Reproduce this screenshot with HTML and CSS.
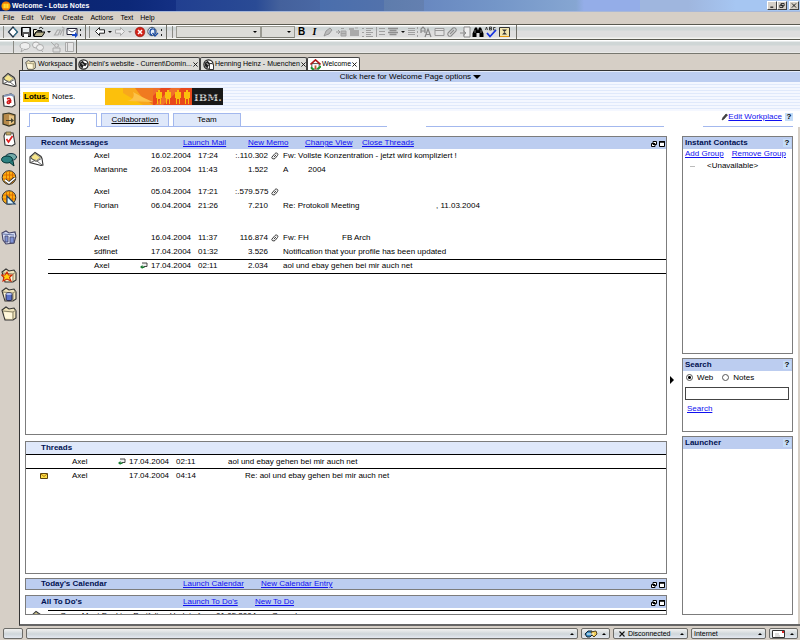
FILE: index.html
```
<!DOCTYPE html>
<html lang="en">
<head>
    <meta charset="UTF-8">
    <meta name="viewport" content="width=device-width, initial-scale=1.0">
    <title>Welcome - Lotus Notes</title>
    <link rel="stylesheet" href="styles.css">
</head>
<body>
    <!-- Icon set -->
    <svg class="icon-defs" aria-hidden="true">
        <symbol id="i-notes" viewBox="0 0 11 11"><circle cx="5.5" cy="5.5" r="5" fill="#ff9a00"/><path d="M3.5 3v5M5.5 3v5M7.5 3v5" stroke="#fff04a" stroke-width="1.2"/><path d="M2 2h7M1 9h8" stroke="#d04a10" stroke-width=".7"/></symbol>
        <symbol id="i-diamond" viewBox="0 0 12 12"><path d="M6 1l4.500 5L6 11 1.500 6z" fill="#fff" stroke="#234" stroke-width="1.2"/><path d="M7 2l3.500 4L7 10" stroke="#38a" fill="none"/></symbol>
        <symbol id="i-save" viewBox="0 0 12 12"><path d="M1.5 1.5h9v9h-8l-1-1z" fill="#555" stroke="#000"/><path d="M3 2h6v4H3z" fill="#e8eef0"/><path d="M4 8h4v3H4z" fill="#fff"/></symbol>
        <symbol id="i-open" viewBox="0 0 12 12"><path d="M.5 10V3.500h3l1 1h4V6H3z" fill="#f4efd0" stroke="#000"/><path d="M3 6h9l-3 4.500H.800z" fill="#b9b28c" stroke="#000"/><path d="M6 2.500c2-2 3-1 4 .500" fill="none" stroke="#000"/></symbol>
        <symbol id="i-sign" viewBox="0 0 12 12"><path d="M1.500 9l3-5h3L5 9zM7 9l3-6M9 1l2 1-1 8" fill="none" stroke="#aaa" stroke-width="1.200"/></symbol>
        <symbol id="i-send" viewBox="0 0 12 12"><path d="M1 2.500h10v6H1z" fill="#fff" stroke="#223"/><path d="M1 3l5 3 5-3" fill="none" stroke="#667"/><path d="M6 8h3V6l3 3-3 3v-2H6z" fill="#1848c8"/></symbol>
        <symbol id="i-back" viewBox="0 0 12 12"><path d="M1.500 5.500l4-4v2.300h5v3.400h-5v2.300z" fill="#fff" stroke="#222"/></symbol>
        <symbol id="i-fwd" viewBox="0 0 12 12"><path d="M10.500 5.500l-4-4v2.300h-5v3.400h5v2.300z" fill="#eee" stroke="#aaa"/></symbol>
        <symbol id="i-stop" viewBox="0 0 12 12"><circle cx="6" cy="6" r="4.800" fill="#d32218" stroke="#8a1008" stroke-width=".6"/><path d="M4 4l4 4M8 4l-4 4" stroke="#fff" stroke-width="1.500"/></symbol>
        <symbol id="i-refresh" viewBox="0 0 12 12"><circle cx="5" cy="5.500" r="4.200" fill="#e8f0fa" stroke="#456"/><path d="M3 6c0-4 5-4 5-1v3M5.500 7l2.500 3 3-3M3 6c0 2 1 3 2 3" fill="none" stroke="#1a4aa0" stroke-width="1.300"/></symbol>
        <symbol id="i-pen" viewBox="0 0 12 12"><path d="M2 10l2-5 4-3 2 2-3 4-3 1z" fill="#bbb" stroke="#8c8c8c" stroke-width=".800"/></symbol>
        <symbol id="i-indent" viewBox="0 0 12 12"><path d="M1 6h3M3 4l2 2-2 2" fill="none" stroke="#999"/><path d="M6 2.500h3M6 5h5v5H6zM6 7.500h5" fill="#bbb" stroke="#a2a2a2"/></symbol>
        <symbol id="i-paste" viewBox="0 0 12 12"><path d="M1 2h5v2H1zM2 4h9v6H2z" fill="#aaa"/><path d="M7 2h3" stroke="#aaa"/></symbol>
        <symbol id="i-list" viewBox="0 0 12 12"><path d="M1 2.500h2M1 6.500h2M1 10.500h2M5 2.500h7M5 4.500h5M5 6.500h7M5 8.500h5M5 10.500h7" stroke="#a0a0a0"/></symbol>
        <symbol id="i-numlist" viewBox="0 0 12 12"><path d="M2.500 1v10M5 2.500h6M5 5.500h6M5 8.500h6" stroke="#a0a0a0"/></symbol>
        <symbol id="i-align" viewBox="0 0 12 12"><path d="M1 2.500h10M2.500 4.500h7M1 6.500h10M2.500 8.500h7" stroke="#8f8f8f" stroke-width="1.300"/></symbol>
        <symbol id="i-spacing" viewBox="0 0 12 12"><path d="M1 2.500h7M1 4.500h7M1 6.500h7M1 8.500h7M10.500 1v2M10.500 5v2M10.500 9v2" stroke="#a0a0a0"/></symbol>
        <symbol id="i-style" viewBox="0 0 12 12"><path d="M1 7V3l2-2 2 2v4M1 5h4M5 11l3-8 3 8M6 8.500h4" fill="none" stroke="#888" stroke-width="1.200"/></symbol>
        <symbol id="i-table" viewBox="0 0 12 12"><path d="M2 2.500h9v7H2zM2 4.500h9" fill="#e2e2e2" stroke="#999"/></symbol>
        <symbol id="i-clip" viewBox="0 0 12 12"><path d="M2 7l5-5c2-1 4 1 3 3l-5 5c-2 1-4-1-3-3l4-4M4 8l4-4" fill="none" stroke="#8c8c8c" stroke-width="1.100"/></symbol>
        <symbol id="i-import" viewBox="0 0 12 12"><path d="M5 1h6v10H5zM1 7h5M4 4.500l3 2.500-3 2.500" fill="#eee" stroke="#8c8c8c"/></symbol>
        <symbol id="i-find" viewBox="0 0 12 12"><path d="M3 1.500h2l1 3 1-3h2l2.500 6v3.500h-4V7h-3v4h-4V7.500z" fill="#000"/><path d="M3 4v3M9 4v3" stroke="#bbb" stroke-width=".600"/></symbol>
        <symbol id="i-spell" viewBox="0 0 12 12"><path d="M.500 4l1-3 1 3M4.500 4V1h2v1.500h-2M6.500 2.500V4h-2M10.500 1.500h-2V4h2" fill="none" stroke="#222" stroke-width=".800"/><path d="M2 7l3 3.500L11 4" fill="none" stroke="#1430e0" stroke-width="1.800"/></symbol>
        <symbol id="i-props" viewBox="0 0 12 12"><path d="M1.500 1.500h10v9h-10z" fill="#f2e6b0" stroke="#333"/><path d="M4 3.500h5L6.500 6zM4 8.500h5L6.500 6z" fill="#333"/><path d="M2 10.500h9" stroke="#e89b10"/></symbol>
        <symbol id="i-chat" viewBox="0 0 12 12"><ellipse cx="6" cy="5" rx="5" ry="3.500" fill="#eee" stroke="#aaa"/><path d="M3 8l-1 3 4-3" fill="#eee" stroke="#aaa"/></symbol>
        <symbol id="i-chats" viewBox="0 0 12 12"><ellipse cx="4" cy="4" rx="3.500" ry="3" fill="#eee" stroke="#aaa"/><ellipse cx="8" cy="6.500" rx="3.500" ry="3" fill="#eee" stroke="#aaa"/><path d="M9 9l2 2" stroke="#aaa"/></symbol>
        <symbol id="i-person" viewBox="0 0 12 12"><path d="M1 1l4 4M3 11V7h7v4zM8 3v3" fill="#ddd" stroke="#aaa"/><circle cx="6.500" cy="4.500" r="1.800" fill="#ddd" stroke="#aaa"/></symbol>
        <symbol id="i-book" viewBox="0 0 12 12"><path d="M2.500 1.500h8v9h-8zM4.500 2v8" fill="#e4e4e4" stroke="#aaa"/></symbol>

        <symbol id="i-mail" viewBox="0 0 16 16"><path d="M2 6l5-4.500 6 4 1 2 1 6.500-2 .500-11-3z" fill="#fff" stroke="#333" stroke-width="1.100"/><path d="M3.500 5.500L7 2.500l5.500 4-4 3-5-1.500z" fill="#f6e58a" stroke="#776" stroke-width=".800"/><path d="M2 6.500l6 4 5.500-3M2.500 11.500L7 9.500M9 10l5 4" fill="none" stroke="#555" stroke-width=".900"/></symbol>
        <symbol id="i-calendar" viewBox="0 0 16 16"><path d="M2 4l8-2 3 2 1 9-3 2-8-1z" fill="#fff" stroke="#333" stroke-width="1.200"/><path d="M3 4l7-1.500L13 4" stroke="#8497b8" stroke-width="2" fill="none"/><path d="M6 7c3-1.500 4 0 3.500 4M9.500 9c-4-1-4 3-1.500 2.500z" fill="none" stroke="#d01818" stroke-width="1.600"/></symbol>
        <symbol id="i-contacts" viewBox="0 0 16 16"><path d="M2 3l6-1 6 2v9l-6 2-6-2z" fill="#b78a4a" stroke="#332" stroke-width="1.200"/><path d="M8 4l5 1v7l-5 2z" fill="#e4c486"/><path d="M5 9h5V7l3 2.500-3 2.500v-2H5z" fill="#443"/></symbol>
        <symbol id="i-todo" viewBox="0 0 16 16"><path d="M4 2h8l2 11-3 2-7-1-1-9z" fill="#fff" stroke="#333" stroke-width="1.100"/><path d="M5 1h5v3H5z" fill="#c7a86a" stroke="#553" stroke-width=".700"/><path d="M5.500 8l2 3 4-6" fill="none" stroke="#e02020" stroke-width="1.700"/></symbol>
        <symbol id="i-talk" viewBox="0 0 16 16"><ellipse cx="10" cy="6" rx="5.500" ry="3.500" fill="#71aaa8" stroke="#134"/><ellipse cx="6" cy="8.500" rx="5.500" ry="3.500" fill="#2d8080" stroke="#033"/><path d="M8 11l5 4-1-5" fill="#2d8080" stroke="#033"/></symbol>
        <symbol id="i-globe" viewBox="0 0 16 16"><circle cx="8" cy="7.500" r="6.800" fill="#ffae12" stroke="#333"/><path d="M5.500 1.500v12M8.500 1v13M11.500 2v11M2 5h12M2 9h12" stroke="#d56a00" stroke-width=".900"/><path d="M4 10l4 3 6-5" fill="none" stroke="#333" stroke-width="3"/><path d="M4 10l4 3 6-5" fill="none" stroke="#fff" stroke-width="1.600"/></symbol>
        <symbol id="i-design" viewBox="0 0 16 16"><circle cx="8" cy="7.500" r="6.800" fill="#ffae12" stroke="#333"/><path d="M5.500 1.500v12M8.500 1v13M11.500 2v11M2 5h12M2 9h12" stroke="#d56a00" stroke-width=".900"/><path d="M6 6l8 8H6z" fill="#d8f0f8" stroke="#246" stroke-width="1.200"/></symbol>
        <symbol id="i-folder" viewBox="0 0 16 16"><path d="M1 5l4-3 3 2 5-1 2 3v7l-3 2H4z" fill="#efe3ba" stroke="#333" stroke-width="1.100"/><path d="M2 6l10 1v7M12 7l3-2" fill="none" stroke="#8a8468"/><path d="M3 7l8 1v6l-7-1z" fill="#fff8dc"/></symbol>
        <symbol id="i-servers" viewBox="0 0 16 16"><path d="M1 4l4-2 3 2 6-1 1 4-2 7-8 1-3-4z" fill="#d5dcf4" stroke="#446" stroke-width="1.100"/><path d="M4 7h3v6H4zM9 8h4v6H9z" fill="#8093d8" stroke="#446" stroke-width=".800"/><path d="M2 5l11 1" stroke="#6474a8"/></symbol>
        <symbol id="i-star" viewBox="0 0 16 16"><use href="#i-folder"/><path d="M6 5l1.500 3H11l-2.500 2.500L10 14l-4-2-4 2 1-3.500L.500 8H4z" fill="#ffcf10" stroke="#d02808" stroke-width="1.100"/></symbol>
        <symbol id="i-data" viewBox="0 0 16 16"><use href="#i-folder"/><path d="M5 8c0-1.500 6-1.500 6 0v5.500c0 1.500-6 1.500-6 0z" fill="#5b72c8" stroke="#224"/><ellipse cx="8" cy="8" rx="3" ry="1" fill="#b8c6f4"/></symbol>
        <symbol id="i-page" viewBox="0 0 12 12"><circle cx="6" cy="6" r="5" fill="#fff" stroke="#222" stroke-width="1.400"/><path d="M2 7V4l3-2 2 2 3 1-2 3-2-1-1 3-2-1z" fill="#222"/><path d="M4 5l2 1" stroke="#fff"/></symbol>
        <symbol id="i-doc" viewBox="0 0 12 12"><use href="#i-page"/><path d="M7 5h3l1.500 1.500v5H7z" fill="#fff" stroke="#222"/></symbol>
        <symbol id="i-home" viewBox="0 0 12 12"><path d="M2 5h8v6H2z" fill="#fff" stroke="#444"/><path d="M.500 6L6 1l5.500 5" fill="none" stroke="#b01818" stroke-width="1.800"/><path d="M5 7h2v4H5z" fill="#c85a2a"/><path d="M1 9l3 3M8 11l4-3" stroke="#1b9a30" stroke-width="2"/></symbol>
        <symbol id="i-attach" viewBox="0 0 8 8"><path d="M1 5l3-3.500c1.500-1.200 3.800 0 2.500 2L4 6.500C2.500 7.500 0 6.500 1 5zM3 5.200l2-2.400" fill="none" stroke="#222" stroke-width=".900"/></symbol>
        <symbol id="i-reply" viewBox="0 0 8 8"><path d="M2 1h5v3.500H4L2.500 6" fill="#eee" stroke="#333" stroke-width=".900"/><path d="M0 5l2.500-2v1.500h2v1.500h-2V7z" fill="#187a30"/></symbol>
        <symbol id="i-new" viewBox="0 0 8 6"><path d="M.500.500h7v5h-7z" fill="#ffe048" stroke="#5c4310"/><path d="M1 1l3 2.500L7 1" fill="none" stroke="#b07a10"/></symbol>
        <symbol id="i-restore" viewBox="0 0 6 6"><path d="M2 .500h3.500v3H2zM.500 2.500h3.500v3H.500z" fill="#fff" stroke="#000"/></symbol>
        <symbol id="i-max" viewBox="0 0 6 6"><path d="M.500.500h5v5h-5z" fill="#fff" stroke="#000"/><path d="M0 1h6" stroke="#000" stroke-width="1.500"/></symbol>
        <symbol id="i-x" viewBox="0 0 6 6"><path d="M.500.500l5 5M5.500.500l-5 5" stroke="#111" stroke-width="1.100"/></symbol>
        <symbol id="i-min" viewBox="0 0 6 6"><path d="M1 5h3.500" stroke="#000" stroke-width="1.300"/></symbol>
        <symbol id="i-pencil" viewBox="0 0 7 8"><path d="M1 7l1-2.500L5 1l1.500 1L3 6z" fill="#444" stroke="#222" stroke-width=".600"/></symbol>
        <symbol id="i-net" viewBox="0 0 14 8"><path d="M1 4l3-3h4l1 3-3 3H3z" fill="#3c8fc4" stroke="#123"/><path d="M7 2l5-1 1 3-3 3-2-2z" fill="#f0ce58" stroke="#542"/><path d="M3 4h7" stroke="#fff"/></symbol>
        <symbol id="i-letter" viewBox="0 0 13 8"><path d="M.500.500h12v7H.500z" fill="#fff" stroke="#333"/><path d="M3 4h4M3 6h5" stroke="#bbb"/><path d="M10 1h2v2h-2z" fill="#d22"/></symbol>
    </svg>

    <header class="titlebar">
        <svg class="ico-title"><use href="#i-notes"/></svg>
        <h1>Welcome - Lotus Notes</h1>
        <div class="win-buttons">
            <button aria-label="Minimize"><svg><use href="#i-min"/></svg></button>
            <button aria-label="Restore"><svg><use href="#i-restore"/></svg></button>
            <button aria-label="Close"><svg><use href="#i-x"/></svg></button>
        </div>
    </header>

    <nav class="menubar">
        <button>File</button>
        <button>Edit</button>
        <button>View</button>
        <button>Create</button>
        <button>Actions</button>
        <button>Text</button>
        <button>Help</button>
    </nav>

    <div class="toolbar">
        <div class="group group-file">
            <button aria-label="Properties"><svg><use href="#i-diamond"/></svg></button>
            <button aria-label="Save"><svg><use href="#i-save"/></svg></button>
            <button aria-label="Open"><svg><use href="#i-open"/></svg></button>
            <i class="caret"></i>
            <button aria-label="Sign"><svg><use href="#i-sign"/></svg></button>
            <button aria-label="Send"><svg><use href="#i-send"/></svg></button>
            <i class="dots"></i>
        </div>
        <div class="group group-nav">
            <button aria-label="Back"><svg><use href="#i-back"/></svg></button>
            <i class="caret"></i>
            <button aria-label="Forward"><svg><use href="#i-fwd"/></svg></button>
            <i class="caret dim"></i>
            <button aria-label="Stop"><svg><use href="#i-stop"/></svg></button>
            <button aria-label="Refresh"><svg><use href="#i-refresh"/></svg></button>
            <i class="dots"></i>
        </div>
        <div class="group group-edit">
            <span class="combo combo-font"><select aria-label="Font"><option></option></select></span>
            <span class="combo combo-size"><select aria-label="Size"><option></option></select></span>
            <button class="bold">B</button>
            <button class="italic">I</button>
            <button aria-label="Highlighter"><svg><use href="#i-pen"/></svg></button>
            <button aria-label="Indent"><svg><use href="#i-indent"/></svg></button>
            <button aria-label="Paste"><svg><use href="#i-paste"/></svg></button>
            <button aria-label="Bullets"><svg><use href="#i-list"/></svg></button>
            <button aria-label="Numbers"><svg><use href="#i-numlist"/></svg></button>
            <button aria-label="Align"><svg><use href="#i-align"/></svg></button>
            <i class="caret"></i>
            <button aria-label="Spacing"><svg><use href="#i-spacing"/></svg></button>
            <button aria-label="Style"><svg><use href="#i-style"/></svg></button>
            <button aria-label="Table"><svg><use href="#i-table"/></svg></button>
            <button aria-label="Attach"><svg><use href="#i-clip"/></svg></button>
            <button aria-label="Import"><svg><use href="#i-import"/></svg></button>
            <button aria-label="Find"><svg><use href="#i-find"/></svg></button>
            <button aria-label="Spell check"><svg><use href="#i-spell"/></svg></button>
            <button aria-label="Text properties"><svg><use href="#i-props"/></svg></button>
        </div>
    </div>
    <div class="toolbar">
        <div class="group group-chat">
            <button aria-label="Chat"><svg><use href="#i-chat"/></svg></button>
            <button aria-label="Group chat"><svg><use href="#i-chats"/></svg></button>
            <button class="spaced" aria-label="Status"><svg><use href="#i-person"/></svg></button>
            <button aria-label="Address book"><svg><use href="#i-book"/></svg></button>
        </div>
    </div>

    <div class="desk">
        <aside class="bookmarks">
            <div class="bookmark-set apps">
                <button aria-label="Mail"><svg><use href="#i-mail"/></svg></button>
                <button aria-label="Calendar"><svg><use href="#i-calendar"/></svg></button>
                <button aria-label="Contacts"><svg><use href="#i-contacts"/></svg></button>
                <button aria-label="To Do"><svg><use href="#i-todo"/></svg></button>
                <button aria-label="Discussion"><svg><use href="#i-talk"/></svg></button>
                <button aria-label="Administrator"><svg><use href="#i-globe"/></svg></button>
                <button aria-label="Designer"><svg><use href="#i-design"/></svg></button>
            </div>
            <div class="bookmark-set">
                <button aria-label="Servers"><svg><use href="#i-servers"/></svg></button>
            </div>
            <div class="bookmark-set">
                <button aria-label="Favorites"><svg><use href="#i-star"/></svg></button>
                <button aria-label="Databases"><svg><use href="#i-data"/></svg></button>
                <button aria-label="More bookmarks"><svg><use href="#i-folder"/></svg></button>
            </div>
        </aside>

        <div class="window">
            <nav class="window-tabs">
                <div class="wtab"><svg><use href="#i-folder"/></svg>Workspace</div>
                <div class="wtab wtab-site"><svg><use href="#i-page"/></svg>heini's website - Current\Domin...<button aria-label="Close tab"><svg><use href="#i-x"/></svg></button></div>
                <div class="wtab wtab-mail"><svg><use href="#i-doc"/></svg>Henning Heinz - Muenchen<button aria-label="Close tab"><svg><use href="#i-x"/></svg></button></div>
                <div class="wtab wtab-home active"><svg><use href="#i-home"/></svg>Welcome<button aria-label="Close tab"><svg><use href="#i-x"/></svg></button></div>
            </nav>

            <main class="page">
                <button class="page-options">Click here for Welcome Page options <i class="arrow-down"></i></button>
                <div class="brand">
                    <div class="brand-name"><b>Lotus.</b> Notes.</div>
                    <svg class="banner" viewBox="0 0 118 17" role="img" aria-label="IBM">
                        <path d="M0 0h48v17H0z" fill="#fcc00c"/>
                        <path d="M18 0h30v17H38L18 5z" fill="#f8a81c"/>
                        <path d="M30 0h18v17L36 8z" fill="#f07a20"/>
                        <path d="M22 13c6-1 8-5 6-9l9 5 11 5z" fill="#fcc24a"/>
                        <path d="M48 0h39v17H48z" fill="#e8481c"/>
                        <path d="M48 0h8l-8 8zM66 0h10L58 17h-8z" fill="#f0702c"/>
                        <g fill="#fcc00c">
                            <path id="man" d="M53 2h2v2h2v6h-1v6h-1v-5h-2v5h-1v-6h-1V4h2z"/>
                            <use href="#man" x="9"/>
                            <use href="#man" x="19"/>
                            <use href="#man" x="28"/>
                        </g>
                        <path d="M87 0h31v17H87z" fill="#181818"/>
                        <text x="89" y="13" class="ibm">IBM.</text>
                        <path d="M89 6.500h27M89 8.500h27M89 10.500h27" stroke="#181818" stroke-width=".4"/>
                    </svg>
                </div>

                <div class="tab-row">
                    <nav class="page-tabs">
                        <a href="#" class="current">Today</a>
                        <a href="#" class="hover">Collaboration</a>
                        <a href="#">Team</a>
                    </nav>
                    <div class="rule"></div>
                    <div class="edit-box">
                        <svg><use href="#i-pencil"/></svg><a href="#">Edit Workplace</a>
                        <button class="help">?</button>
                    </div>
                </div>

                <div class="board">
                    <div class="column">
                        <section class="panel recent">
                            <div class="panel-head">
                                <h2>Recent Messages</h2>
                                <a href="#">Launch Mail</a>
                                <a href="#">New Memo</a>
                                <a href="#">Change View</a>
                                <a href="#">Close Threads</a>
                                <div class="tools">
                                    <button aria-label="Restore"><svg><use href="#i-restore"/></svg></button>
                                    <button aria-label="Maximize"><svg><use href="#i-max"/></svg></button>
                                </div>
                            </div>
                            <div class="mail-body">
                                <svg class="mail-icon"><use href="#i-mail"/></svg>
                                <table class="mail">
                                    <colgroup>
                                        <col class="c-lead"><col class="c-name"><col class="c-flag"><col class="c-date"><col class="c-time"><col class="c-size"><col class="c-clip"><col>
                                    </colgroup>
                                    <tr><td></td><td>Axel</td><td></td><td>16.02.2004</td><td>17:24</td><td class="num">:.110.302</td><td class="mark"><svg><use href="#i-attach"/></svg></td><td>Fw: Vollste Konzentration - jetzt wird kompliziert !</td></tr>
                                    <tr><td></td><td>Marianne</td><td></td><td>26.03.2004</td><td>11:43</td><td class="num">1.522</td><td></td><td><span class="part part-s">A</span>2004</td></tr>
                                    <tr class="after-gap"><td></td><td>Axel</td><td></td><td>05.04.2004</td><td>17:21</td><td class="num">:.579.575</td><td class="mark"><svg><use href="#i-attach"/></svg></td><td></td></tr>
                                    <tr><td></td><td>Florian</td><td></td><td>06.04.2004</td><td>21:26</td><td class="num">7.210</td><td></td><td><span class="part part-l">Re: Protokoll Meeting</span>, 11.03.2004</td></tr>
                                    <tr class="after-gap wide"><td></td><td>Axel</td><td></td><td>16.04.2004</td><td>11:37</td><td class="num">116.874</td><td class="mark"><svg><use href="#i-attach"/></svg></td><td><span class="part part-m">Fw: FH</span>FB Arch</td></tr>
                                    <tr><td></td><td>sdfinet</td><td></td><td>17.04.2004</td><td>01:32</td><td class="num">3.526</td><td></td><td>Notification that your profile has been updated</td></tr>
                                    <tr class="selected"><td></td><td>Axel</td><td class="mark"><svg><use href="#i-reply"/></svg></td><td>17.04.2004</td><td>02:11</td><td class="num">2.034</td><td></td><td>aol und ebay gehen bei mir auch net</td></tr>
                                </table>
                            </div>
                        </section>

                        <section class="panel threads">
                            <div class="panel-head light">
                                <h2>Threads</h2>
                            </div>
                            <table class="mail">
                                <colgroup>
                                    <col class="c-unread"><col class="c-name"><col class="c-flag"><col class="c-date"><col class="c-topic"><col>
                                </colgroup>
                                <tr class="selected"><td></td><td>Axel</td><td class="mark"><svg><use href="#i-reply"/></svg></td><td>17.04.2004</td><td>02:11</td><td>aol und ebay gehen bei mir auch net</td></tr>
                                <tr><td class="unread"><svg><use href="#i-new"/></svg></td><td>Axel</td><td></td><td>17.04.2004</td><td>04:14</td><td class="child">Re: aol und ebay gehen bei mir auch net</td></tr>
                            </table>
                        </section>

                        <section class="panel calendar">
                            <div class="panel-head">
                                <h2>Today's Calendar</h2>
                                <a href="#">Launch Calendar</a>
                                <a href="#">New Calendar Entry</a>
                                <div class="tools">
                                    <button aria-label="Restore"><svg><use href="#i-restore"/></svg></button>
                                    <button aria-label="Maximize"><svg><use href="#i-max"/></svg></button>
                                </div>
                            </div>
                        </section>

                        <section class="panel todo">
                            <div class="panel-head">
                                <h2>All To Do's</h2>
                                <a href="#">Launch To Do's</a>
                                <a href="#">New To Do</a>
                                <div class="tools">
                                    <button aria-label="Restore"><svg><use href="#i-restore"/></svg></button>
                                    <button aria-label="Maximize"><svg><use href="#i-max"/></svg></button>
                                </div>
                            </div>
                            <div class="todo-list">
                                <svg><use href="#i-mail"/></svg>
                                <div class="todo-line">Open Meet Desktop Portfolio - Update from 01.05.2004 um Gonzal</div>
                            </div>
                        </section>
                    </div>

                    <button class="splitter" aria-label="Collapse side panels"><i class="arrow-right"></i></button>

                    <div class="column side">
                        <section class="panel contacts">
                            <div class="panel-head">
                                <h2>Instant Contacts</h2>
                                <button class="help">?</button>
                            </div>
                            <div class="contact-links"><a href="#">Add Group</a><a href="#">Remove Group</a></div>
                            <div class="contact-status">&lt;Unavailable&gt;</div>
                        </section>

                        <form class="panel search">
                            <div class="panel-head">
                                <h2>Search</h2>
                                <button type="button" class="help">?</button>
                            </div>
                            <div class="scope">
                                <input type="radio" name="scope" id="scope-web" checked><label for="scope-web">Web</label>
                                <input type="radio" name="scope" id="scope-notes"><label for="scope-notes">Notes</label>
                            </div>
                            <input type="text" class="query" aria-label="Search for">
                            <a href="#" class="go">Search</a>
                        </form>

                        <section class="panel launcher">
                            <div class="panel-head">
                                <h2>Launcher</h2>
                                <button class="help">?</button>
                            </div>
                        </section>
                    </div>
                </div>
            </main>
        </div>
    </div>

    <footer class="statusbar">
        <button class="s-lock" aria-label="Security"></button>
        <button class="s-message" aria-label="Messages"><i class="arrow-up"></i></button>
        <button class="s-icon" aria-label="Network"><svg class="ico-net"><use href="#i-net"/></svg><i class="arrow-up"></i></button>
        <button class="s-text"><svg><use href="#i-x"/></svg><span>Disconnected</span><i class="arrow-up"></i></button>
        <button class="s-text"><span>Internet</span><i class="arrow-up"></i></button>
        <button class="s-icon" aria-label="Mail"><svg class="ico-letter"><use href="#i-letter"/></svg><i class="arrow-up"></i></button>
    </footer>
</body>
</html>
```
FILE: styles.css
```
* {
    box-sizing: border-box;
}
body {
    margin: 0;
    min-height: 100vh;
    display: flex;
    flex-direction: column;
    background-color: #d6cfc6;
    color: #000;
    font-family: "Liberation Sans", Arial, sans-serif;
    font-size: 8px;
    line-height: 10px;
}
button, select, input {
    margin: 0;
    padding: 0;
    border: none;
    border-radius: 0;
    background: none;
    color: inherit;
    font: inherit;
}
h1, h2 {
    margin: 0;
    font-size: inherit;
}
svg {
    display: block;
    flex: none;
}
a {
    color: #1010f0;
}
.icon-defs {
    position: absolute;
    width: 0;
    height: 0;
}

/* Title bar and menu */
.titlebar {
    display: flex;
    align-items: center;
    height: 12px;
    padding: 0 1px;
    color: #fff;
    font-size: 7px;
    border-bottom: 1px solid #a8b8d8;
    background: linear-gradient(90deg, #08216b 0%, #0c2878 16%, #143084 22%, #213f90 22%, #2a4b95 32%, #44619c 35%, #4a68a4 40%, #4a6eac 40%, #5272ac 48%, #5e7cac 48%, #6480b0 53%, #6888c0 53%, #7496c8 62%, #86a6d2 72%, #94ade8 73%, #94ade8 80%, #9fb6de 80%, #9fb6de 86%, #a6c6f2 92%);
}
.titlebar h1 {
    flex: 1;
}
.ico-title {
    width: 10px;
    height: 10px;
    margin-right: 1px;
}
.win-buttons {
    display: flex;
}
.win-buttons button {
    width: 10px;
    height: 9px;
    padding: 1px;
    background-color: #d6d0c8;
    border: 1px solid #fff;
    border-right-color: #404040;
    border-bottom-color: #404040;
}
.win-buttons button:last-child {
    margin-left: 2px;
}
.win-buttons svg {
    width: 6px;
    height: 5px;
}
.menubar {
    display: flex;
    gap: 7px;
    height: 12px;
    padding-left: 3px;
    font-size: 7px;
}

/* Toolbars */
.toolbar {
    display: flex;
    height: 15px;
    border-top: 1px solid #5a5a50;
    background: linear-gradient(#fff 1px, #cfd6d6 2px, #cfd6d6 5px, #dedede 6px, #dedede 12px, #f4f4f0 13px);
}
.toolbar + .toolbar {
    border-bottom: 1px solid #77776f;
}
.group {
    display: flex;
    align-items: center;
    border-right: 1px solid #6e6e66;
}
/* drag grip */
.group::before {
    content: "";
    width: 1px;
    height: 12px;
    background-color: #8a8a84;
}
.group button {
    display: flex;
    justify-content: center;
    width: 13px;
}
.group button svg {
    width: 12px;
    height: 12px;
}
.group-file {
    width: 86px;
    padding-left: 3px;
}
.group-file::before {
    margin-right: 2px;
}
.group-nav {
    width: 81px;
    padding-left: 3px;
}
.group-nav::before {
    margin-right: 3px;
}
.group-edit {
    width: 350px;
    padding-left: 5px;
}
.group-edit::before {
    margin-right: 3px;
}
.group-chat {
    width: 77px;
    padding-left: 13px;
}
.group-chat::before {
    margin-right: 4px;
}
.group .spaced {
    margin-left: 5px;
}
.group .bold, .group .italic {
    font-weight: bold;
    font-size: 10px;
}
.group .italic {
    font-family: "Liberation Serif", serif;
    font-style: italic;
}
.caret {
    margin: 0 1px 0 2px;
    border: 2px solid transparent;
    border-top-color: #111;
    border-bottom: none;
}
.caret.dim {
    border-top-color: #999;
}
.dots {
    width: 1px;
    height: 7px;
    margin-left: 2px;
    background: linear-gradient(#222 2px, transparent 2px, transparent 5px, #222 5px);
}
.combo {
    position: relative;
    height: 12px;
    background-color: #dcdcd8;
    border: 1px solid #9a9a92;
    border-bottom-color: #7c7c74;
}
.combo::after {
    content: "";
    position: absolute;
    right: 3px;
    top: 4px;
    border: 2px solid transparent;
    border-top-color: #000;
    border-bottom: none;
    pointer-events: none;
}
.combo select {
    display: block;
    width: 100%;
    height: 10px;
    appearance: none;
}
.combo-font {
    width: 85px;
}
.combo-size {
    width: 34px;
}

/* Bookmark bar and window */
.desk {
    flex: 1;
    display: flex;
}
.bookmarks {
    width: 19px;
    padding: 18px 0 0 1px;
}
.bookmark-set {
    display: flex;
    flex-direction: column;
    gap: 3px;
    margin-bottom: 22px;
}
.bookmark-set.apps {
    justify-content: space-between;
    gap: 0;
    height: 134px;
    margin-bottom: 23px;
}
.bookmark-set svg {
    width: 16px;
    height: 16px;
}
.window {
    flex: 1;
    min-width: 0;
    display: flex;
    flex-direction: column;
}
.window-tabs {
    display: flex;
    align-items: flex-end;
    height: 16px;
    padding-left: 3px;
    font-size: 7px;
}
.wtab {
    display: flex;
    align-items: center;
    gap: 1px;
    height: 13px;
    padding: 0 2px;
    white-space: nowrap;
    background-color: #dcdcd8;
    border: 1px solid #444;
    border-bottom: none;
    border-radius: 2px 2px 0 0;
}
.wtab svg {
    width: 11px;
    height: 11px;
}
.wtab button {
    margin-left: auto;
}
.wtab button svg {
    width: 5px;
    height: 5px;
}
.wtab:first-child {
    width: 54px;
    gap: 2px;
}
.wtab-site {
    width: 124px;
    gap: 0;
    padding: 0 1px;
}
.wtab-mail {
    width: 107px;
}
.wtab-home {
    width: 53px;
}
.wtab.active {
    background-color: #fff;
}
.page {
    flex: 1;
    display: flex;
    flex-direction: column;
    background-color: #fff;
    border: 1px solid #333;
    border-right: none;
    border-bottom: 2px solid #666;
}

/* Welcome page header */
.page-options {
    height: 11px;
    padding-left: 1px;
    background-color: #bccdf0;
    border-top: 1px solid #e4ebfa;
}
.arrow-down {
    display: inline-block;
    border: 4px solid transparent;
    border-top-color: #000;
    border-bottom: none;
}
.brand {
    display: flex;
    height: 29px;
    padding: 6px 0 6px 1px;
    background: repeating-linear-gradient(#f4f7ff 0, #f4f7ff 2px, #e0e9fb 2px, #e0e9fb 3px);
}
.brand-name {
    display: flex;
    align-items: center;
    gap: 3px;
    width: 84px;
    padding-left: 2px;
    background-color: #fff;
}
.brand-name b {
    padding: 0 1px;
    background-color: #fc0;
}
.banner {
    width: 118px;
    height: 17px;
}
.ibm {
    font-family: "DejaVu Serif", serif;
    font-weight: bold;
    font-size: 10px;
    fill: #ccc;
}
.tab-row {
    display: flex;
    gap: 39px;
    height: 16px;
    padding: 0 7px;
}
.page-tabs {
    display: flex;
    align-items: flex-end;
    gap: 4px;
    width: 360px;
    padding-left: 2px;
    border-bottom: 1px solid #a3b8ee;
}
.page-tabs a {
    width: 68px;
    height: 13px;
    padding-top: 1px;
    text-align: center;
    text-decoration: none;
    color: #000;
    background-color: #dfe8fa;
    border: 1px solid #a3b8ee;
    border-bottom: none;
}
.page-tabs .current {
    font-weight: bold;
    background-color: #fff;
    margin-bottom: -1px;
    height: 14px;
}
.page-tabs .hover {
    text-decoration: underline;
}
.rule {
    flex: 1;
    border-bottom: 1px solid #a3b8ee;
}
.edit-box {
    display: flex;
    align-items: center;
    justify-content: flex-end;
    width: 90px;
    padding-bottom: 3px;
    border-bottom: 1px solid #a3b8ee;
}
.edit-box svg {
    width: 7px;
    height: 8px;
}
.edit-box .help {
    margin-left: 3px;
}
.help {
    width: 8px;
    height: 8px;
    line-height: 8px;
    font-weight: bold;
    background-color: #c4dcf8;
}

/* Panels */
.board {
    flex: 1;
    display: flex;
    padding: 9px 5px 9px;
    border-right: 2px solid #d6cfc6;
}
.column {
    flex: 1;
    min-width: 0;
    display: flex;
    flex-direction: column;
}
.column.side {
    flex: none;
    width: 111px;
    gap: 4px;
}
.panel {
    border: 1px solid #7c7c7c;
}
.panel-head {
    display: grid;
    align-items: center;
    height: 12px;
    padding-left: 15px;
    white-space: nowrap;
    background-color: #bccdf0;
}
.panel-head.light {
    background-color: #dfe8fa;
}
.panel-head h2 {
    color: #001050;
}
.tools {
    display: flex;
    gap: 2px;
    margin-right: 1px;
    padding-top: 1px;
    justify-content: flex-end;
}
.tools svg {
    width: 6px;
    height: 6px;
}
.recent {
    flex: 1;
    margin-bottom: 6px;
}
.recent .panel-head {
    grid-template-columns: 142px 65px 57px 57px 1fr auto;
}
.threads {
    min-height: 133px;
    margin-bottom: 4px;
}
.calendar {
    margin-bottom: 5px;
}
.calendar .panel-head {
    height: 10px;
    grid-template-columns: 142px 78px 1fr auto;
}
.todo {
    height: 20px;
    overflow: hidden;
}
.todo .panel-head {
    grid-template-columns: 142px 72px 1fr auto;
}
.todo-list {
    display: flex;
    padding: 2px 0 0 3px;
}
.todo-list svg {
    width: 16px;
    height: 16px;
}
.todo-line {
    flex: 1;
    margin-left: 3px;
    padding-left: 12px;
    border-top: 1px solid #000;
}

/* Message lists */
.mail-body {
    display: flex;
}
.mail-icon {
    width: 16px;
    height: 16px;
    margin: 2px 4px 0 2px;
}
.mail {
    flex: 1;
    width: 100%;
    table-layout: fixed;
    border-collapse: collapse;
    white-space: nowrap;
}
.mail td {
    height: 14px;
    padding: 0;
}
.mail .after-gap td {
    height: 22px;
    padding-top: 8px;
}
.mail .after-gap.wide td {
    height: 32px;
    padding-top: 18px;
}
.mail .selected td {
    border-top: 1px solid #000;
    border-bottom: 1px solid #000;
}
.mail .num {
    text-align: right;
}
.mail svg {
    width: 8px;
    height: 8px;
}
.mail .mark {
    padding-left: 3px;
}
.mail .unread {
    padding-left: 14px;
}
.mail .child {
    padding-left: 17px;
}
.c-lead {
    width: 46px;
}
.c-unread {
    width: 46px;
}
.c-name {
    width: 43px;
}
.c-flag {
    width: 14px;
}
.c-date {
    width: 47px;
}
.c-time {
    width: 37px;
}
.c-size {
    width: 33px;
}
.c-clip {
    width: 15px;
}
.c-topic {
    width: 52px;
}
.part {
    display: inline-block;
}
.part-s {
    width: 25px;
}
.part-m {
    width: 59px;
}
.part-l {
    width: 153px;
}

/* Side panels */
.splitter {
    display: flex;
    align-items: center;
    width: 15px;
    padding: 8px 0 0 3px;
}
.arrow-right {
    border: 4px solid transparent;
    border-left-color: #000;
    border-right: none;
}
.side .panel-head {
    grid-template-columns: 1fr auto;
    padding: 0 1px 0 2px;
}
.contacts {
    height: 218px;
}
.contact-links {
    display: flex;
    gap: 8px;
    padding-left: 2px;
}
.contact-status {
    display: flex;
    align-items: center;
    padding: 2px 0 0 7px;
}
.contact-status::before {
    content: "";
    width: 5px;
    height: 1px;
    margin-right: 12px;
    background-color: #bbb;
}
.search {
    height: 74px;
}
.scope {
    display: flex;
    align-items: center;
    height: 13px;
    padding-left: 3px;
}
.scope label {
    margin: 0 9px 0 4px;
}
.scope input {
    width: 7px;
    height: 7px;
    appearance: none;
    border: 1px solid #555;
    border-radius: 50%;
}
.scope input:checked {
    background: radial-gradient(#000 1px, #fff 2px);
}
.query {
    display: block;
    width: calc(100% - 5px);
    height: 13px;
    margin: 3px 0 4px 2px;
    border: 1px solid #444;
}
.go {
    margin-left: 4px;
}
.launcher {
    flex: 1;
}

/* Status bar */
.statusbar {
    display: flex;
    gap: 3px;
    padding: 2px 2px 1px 3px;
    font-size: 7px;
}
.statusbar button {
    display: flex;
    align-items: center;
    height: 11px;
    padding: 0 3px 0 2px;
    border: 1px solid #6c6c68;
    border-radius: 2px;
    background: linear-gradient(#f2f2f0, #cfd6da 5px, #e4e8f0);
}
.statusbar .s-lock {
    width: 20px;
}
.statusbar .s-message {
    flex: 1;
}
.statusbar .s-icon {
    width: 29px;
}
.statusbar .s-text {
    width: 75px;
}
.statusbar svg {
    width: 6px;
    height: 6px;
    margin: 0 3px;
}
.statusbar .ico-net {
    width: 14px;
    height: 8px;
    margin: 0;
}
.statusbar .ico-letter {
    width: 13px;
    height: 8px;
    margin: 0;
}
.arrow-up {
    margin-left: auto;
    border: 2px solid transparent;
    border-bottom-color: #000;
    border-top: none;
}
```
